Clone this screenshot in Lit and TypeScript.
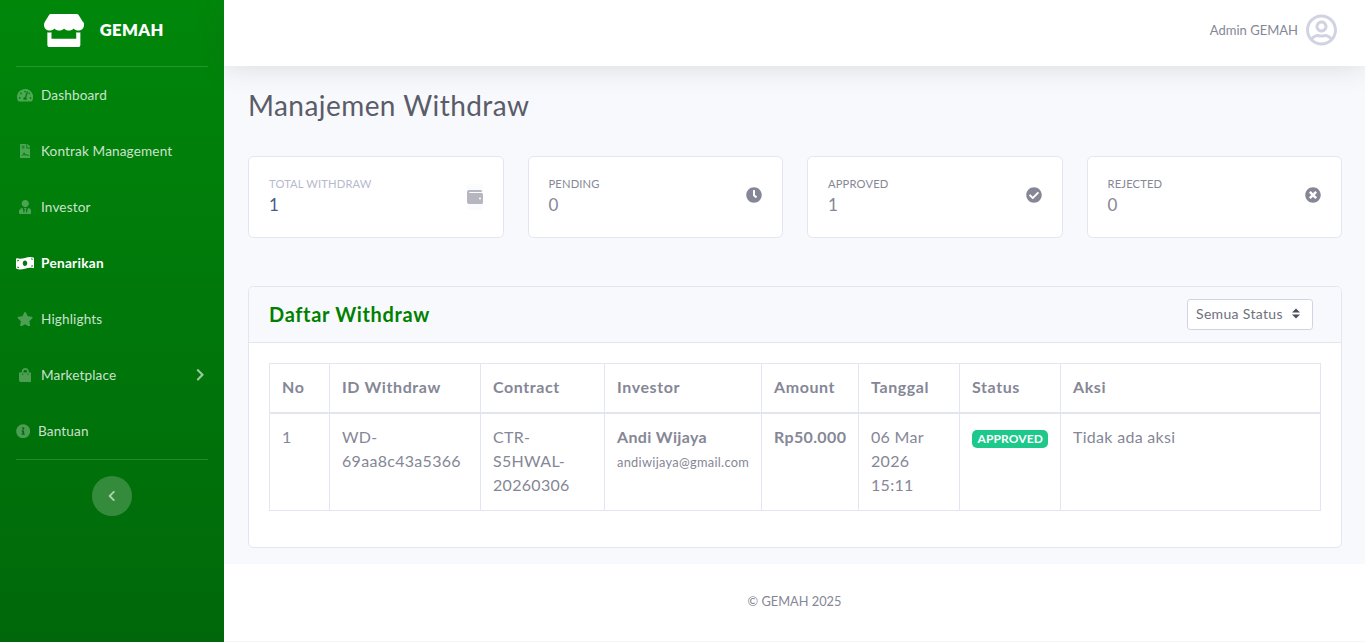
import { LitElement, html, css, svg } from "lit";
import { customElement } from "lit/decorators.js";

const P: Record<string, [number, string]> = {
  store: [616, "M602 118.6L537.1 15C531.3 5.7 521 0 510 0H106C95 0 84.7 5.7 78.9 15L14 118.6c-33.9 54.1-3.9 129.3 59.4 137.9 4.6.6 9.2.9 13.8.9 29.9 0 56.4-13.2 74.6-33.5 18.2 20.3 44.8 33.5 74.6 33.5 29.9 0 56.4-13.2 74.6-33.5 18.2 20.3 44.8 33.5 74.6 33.5 29.9 0 56.4-13.2 74.6-33.5 18.3 20.3 44.8 33.5 74.6 33.5 4.7 0 9.2-.3 13.8-.9 63.5-8.5 93.6-83.7 59.6-137.9zM529.5 288c-10 0-19.9-1.5-29.5-3.8V384H116v-99.8c-9.6 2.2-19.5 3.8-29.5 3.8-6 0-12.1-.4-18-1.2-5.6-.8-11.1-2.1-16.4-3.6V480c0 17.7 14.3 32 32 32h448c17.7 0 32-14.3 32-32V283.2c-5.4 1.6-10.8 2.9-16.4 3.6-6.1.8-12.1 1.2-18.2 1.2z"],
  gauge: [576, "M288 32C128.94 32 0 160.94 0 320c0 52.8 14.25 102.26 39.06 144.8 5.61 9.62 16.3 15.2 27.44 15.2h443c11.14 0 21.83-5.58 27.44-15.2C561.75 422.26 576 372.8 576 320c0-159.06-128.94-288-288-288zm0 64c14.71 0 26.58 10.13 30.32 23.65-1.11 2.26-2.64 4.23-3.45 6.67l-9.22 27.67c-5.13 3.49-10.97 6.01-17.64 6.01-17.67 0-32-14.33-32-32S270.33 96 288 96zM96 384c-17.67 0-32-14.33-32-32s14.33-32 32-32 32 14.33 32 32-14.33 32-32 32zm48-160c-17.67 0-32-14.33-32-32s14.33-32 32-32 32 14.33 32 32-14.33 32-32 32zm246.77-72.41l-61.33 184C343.13 347.33 352 364.54 352 384c0 11.72-3.38 22.55-8.88 32H232.88c-5.5-9.45-8.88-20.28-8.88-32 0-33.94 26.5-61.43 59.9-63.59l61.34-184.01c4.17-12.56 17.73-19.45 30.36-15.17 12.57 4.19 19.35 17.79 15.17 30.36zm14.66 57.2l15.52-46.55c3.47-1.29 7.13-2.23 11.05-2.23 17.67 0 32 14.33 32 32s-14.33 32-32 32c-11.38-.01-20.89-6.28-26.57-15.22zM480 384c-17.67 0-32-14.33-32-32s14.33-32 32-32 32 14.33 32 32-14.33 32-32 32z"],
  file: [384, "M224 136V0H24C10.7 0 0 10.7 0 24v464c0 13.3 10.7 24 24 24h336c13.3 0 24-10.7 24-24V160H248c-13.2 0-24-10.8-24-24zM64 72c0-4.42 3.58-8 8-8h80c4.42 0 8 3.58 8 8v16c0 4.42-3.58 8-8 8H72c-4.42 0-8-3.58-8-8V72zm0 64c0-4.42 3.58-8 8-8h80c4.42 0 8 3.58 8 8v16c0 4.42-3.58 8-8 8H72c-4.42 0-8-3.58-8-8v-16zm192.81 248H304c8.84 0 16 7.16 16 16s-7.16 16-16 16h-47.19c-16.45 0-31.27-9.14-38.64-23.86-2.95-5.92-8.09-6.52-10.17-6.52s-7.22.59-10.02 6.19l-7.67 15.34a15.986 15.986 0 0 1-14.31 8.84c-.38 0-.75-.02-1.14-.05-6.45-.45-12-4.75-14.03-10.89L144 354.59l-10.61 31.88c-5.89 17.66-22.38 29.53-41 29.53H80c-8.84 0-16-7.16-16-16s7.16-16 16-16h12.39c4.83 0 9.11-3.08 10.64-7.66l18.19-54.64c3.3-9.81 12.44-16.41 22.78-16.41s19.48 6.59 22.77 16.41l13.88 41.64c19.77-16.19 54.05-9.7 66 14.16 2.02 4.06 5.96 6.5 10.16 6.5zM377 105L279.1 7c-4.5-4.5-10.6-7-17-7H256v128h128v-6.1c0-6.3-2.5-12.4-7-16.9z"],
  tie: [448, "M224 256c70.7 0 128-57.3 128-128S294.7 0 224 0 96 57.3 96 128s57.3 128 128 128zm95.8 32.6L272 480l-32-136 32-56h-96l32 56-32 136-47.8-191.4C56.9 292 0 350.3 0 422.4V464c0 26.5 21.5 48 48 48h352c26.5 0 48-21.5 48-48v-41.6c0-72.1-56.9-130.4-128.2-133.8z"],
  money: [640, "M621.16 54.46C582.37 38.19 543.55 32 504.75 32c-123.17-.01-246.33 62.34-369.5 62.34-30.89 0-61.76-3.92-92.65-13.72-3.47-1.1-6.95-1.62-10.35-1.62C15.04 79 0 92.32 0 110.81v317.26c0 12.63 7.23 24.6 18.84 29.46C57.63 473.81 96.45 480 135.25 480c123.17 0 246.34-62.35 369.51-62.35 30.89 0 61.76 3.92 92.65 13.72 3.47 1.1 6.95 1.62 10.35 1.62 17.21 0 32.25-13.32 32.25-31.81V83.93c-.01-12.64-7.24-24.6-18.85-29.47zM48 132.22c20.12 5.04 41.12 7.57 62.72 8.93C104.84 170.54 79 192.69 48 192.69v-60.47zm0 285v-47.78c34.37 0 62.18 27.27 63.71 61.4-22.53-1.81-43.59-6.31-63.71-13.62zM320 352c-44.19 0-80-42.99-80-96 0-53.02 35.82-96 80-96s80 42.98 80 96c0 53.03-35.83 96-80 96zm272 27.78c-17.52-4.39-35.71-6.85-54.32-8.44 5.87-26.08 27.5-45.88 54.32-49.28v57.72zm0-236.11c-30.89-3.91-54.86-29.7-55.81-61.55 19.54 2.17 38.09 6.23 55.81 12.66v48.89z"],
  star: [576, "M259.3 17.8L194 150.2 47.9 171.5c-26.2 3.8-36.7 36.1-17.7 54.6l105.7 103-25 145.5c-4.5 26.3 23.2 46 46.4 33.7L288 439.6l130.7 68.7c23.2 12.2 50.9-7.4 46.4-33.7l-25-145.5 105.7-103c19-18.5 8.5-50.8-17.7-54.6L382 150.2 316.7 17.8c-11.7-23.6-45.6-23.9-57.4 0z"],
  bag: [448, "M352 160v-32C352 57.42 294.579 0 224 0 153.42 0 96 57.42 96 128v32H0v272c0 44.183 35.817 80 80 80h288c44.183 0 80-35.817 80-80V160h-96zm-192-32c0-35.29 28.71-64 64-64s64 28.71 64 64v32H160v-32zm160 120c-13.255 0-24-10.745-24-24s10.745-24 24-24 24 10.745 24 24-10.745 24-24 24zm-192 0c-13.255 0-24-10.745-24-24s10.745-24 24-24 24 10.745 24 24-10.745 24-24 24z"],
  info: [512, "M256 8C119.043 8 8 119.083 8 256c0 136.997 111.043 248 248 248s248-111.003 248-248C504 119.083 392.957 8 256 8zm0 110c23.196 0 42 18.804 42 42s-18.804 42-42 42-42-18.804-42-42 18.804-42 42-42zm56 254c0 6.627-5.373 12-12 12h-88c-6.627 0-12-5.373-12-12v-24c0-6.627 5.373-12 12-12h12v-64h-12c-6.627 0-12-5.373-12-12v-24c0-6.627 5.373-12 12-12h64c6.627 0 12 5.373 12 12v100h12c6.627 0 12 5.373 12 12v24z"],
  clock: [512, "M256,8C119,8,8,119,8,256S119,504,256,504,504,393,504,256,393,8,256,8Zm92.49,313h0l-20,25a16,16,0,0,1-22.49,2.5h0l-67-49.72a40,40,0,0,1-15-31.23V112a16,16,0,0,1,16-16h32a16,16,0,0,1,16,16V256l58,42.5A16,16,0,0,1,348.49,321Z"],
  check: [512, "M504 256c0 136.967-111.033 248-248 248S8 392.967 8 256 119.033 8 256 8s248 111.033 248 248zM227.314 387.314l184-184c6.248-6.248 6.248-16.379 0-22.627l-22.627-22.627c-6.248-6.249-16.379-6.249-22.628 0L216 308.118l-70.059-70.059c-6.248-6.248-16.379-6.248-22.628 0l-22.627 22.627c-6.248 6.248-6.248 16.379 0 22.627l104 104c6.249 6.249 16.379 6.249 22.628.001z"],
  times: [512, "M256 8C119 8 8 119 8 256s111 248 248 248 248-111 248-248S393 8 256 8zm121.6 313.1c4.7 4.7 4.7 12.3 0 17L338 377.6c-4.7 4.7-12.3 4.7-17 0L256 312l-65.1 65.6c-4.7 4.7-12.3 4.7-17 0L134.4 338c-4.7-4.7-4.7-12.3 0-17l65.6-65-65.6-65.1c-4.7-4.7-4.7-12.3 0-17l39.6-39.6c4.7-4.7 12.3-4.7 17 0l65 65.7 65.1-65.6c4.7-4.7 12.3-4.7 17 0l39.6 39.6c4.7 4.7 4.7 12.3 0 17L312 256l65.6 65.1z"],
  right: [320, "M285.476 272.971L91.132 467.314c-9.373 9.373-24.569 9.373-33.941 0l-22.667-22.667c-9.357-9.357-9.375-24.522-.04-33.901L188.505 256 34.484 101.255c-9.335-9.379-9.317-24.544.04-33.901l22.667-22.667c9.373-9.373 24.569-9.373 33.941 0L285.475 239.03c9.373 9.372 9.373 24.568.001 33.941z"],
  left: [320, "M34.52 239.03L228.87 44.69c9.37-9.37 24.57-9.37 33.94 0l22.67 22.67c9.36 9.36 9.37 24.52.04 33.9L131.49 256l154.02 154.75c9.34 9.38 9.32 24.54-.04 33.9l-22.67 22.67c-9.37 9.37-24.57 9.37-33.94 0L34.52 272.97c-9.37-9.37-9.37-24.57 0-33.94z"],
  wallet: [512, "M461.2 128H80c-8.84 0-16-7.16-16-16s7.16-16 16-16h384c8.84 0 16-7.16 16-16 0-26.51-21.49-48-48-48H64C28.65 32 0 60.65 0 96v320c0 35.35 28.65 64 64 64h397.2c28.02 0 50.8-21.53 50.8-48V176c0-26.47-22.78-48-50.8-48zM416 336c-17.67 0-32-14.33-32-32s14.33-32 32-32 32 14.33 32 32-14.33 32-32 32z"],
  user: [496, "M248 104c-53 0-96 43-96 96s43 96 96 96 96-43 96-96-43-96-96-96zm0 144c-26.5 0-48-21.5-48-48s21.5-48 48-48 48 21.5 48 48-21.5 48-48 48zm0-240C111 8 0 119 0 256s111 248 248 248 248-111 248-248S385 8 248 8zm0 448c-49.7 0-95.1-18.3-130.1-48.4 14.9-23 40.4-38.6 69.6-39.5 20.8 6.4 40.6 9.6 60.5 9.6s39.7-3.1 60.5-9.6c29.2 1 54.7 16.5 69.6 39.5-35 30.1-80.4 48.4-130.1 48.4zm162.7-84.1c-24.4-31.4-62.1-51.9-105.1-51.9-10.2 0-26 9.6-57.6 9.6-31.5 0-47.4-9.6-57.6-9.6-42.9 0-80.6 20.5-105.1 51.9C61.9 339.2 48 299.2 48 256c0-110.3 89.7-200 200-200s200 89.7 200 200c0 43.2-13.9 83.2-37.3 115.9z"],
};

const icon = (n: string, cls = "") => {
  const [w, d] = P[n];
  return html`<svg class="i ${cls}" viewBox="0 0 ${w} 512" aria-hidden="true">${svg`<path fill="currentColor" d="${d}"></path>`}</svg>`;
};

const nav: { ic: string; label: string; active?: boolean; arrow?: boolean; tight?: boolean }[] = [
  { ic: "gauge", label: "Dashboard" },
  { ic: "file", label: "Kontrak Management" },
  { ic: "tie", label: "Investor" },
  { ic: "money", label: "Penarikan", active: true },
  { ic: "star", label: "Highlights" },
  { ic: "bag", label: "Marketplace", arrow: true },
  { ic: "info", label: "Bantuan", tight: true },
];

const stats = [
  { label: "TOTAL WITHDRAW", value: "1", ic: "wallet", first: true },
  { label: "PENDING", value: "0", ic: "clock" },
  { label: "APPROVED", value: "1", ic: "check" },
  { label: "REJECTED", value: "0", ic: "times" },
];

const cols = [60, 151, 124, 157, 97, 101, 101, 260];

@customElement("app-root")
export class AppRoot extends LitElement {
  static styles = css`
    :host {
      display: flex;
      width: 100%;
      height: 642px;
      overflow: hidden;
      font-family: "Lato", "Noto Sans", sans-serif;
      color: #858796;
      font-size: 16px;
      line-height: 24px;
      background: #f8f9fc;
    }
    * { box-sizing: border-box; }
    .i { display: block; flex: none; height: 1em; }

    .side {
      width: 224px;
      flex: none;
      display: flex;
      flex-direction: column;
      align-items: stretch;
      background: linear-gradient(180deg, #00870a 0%, #00680a 100%);
    }
    .brand {
      height: 66px;
      flex: none;
      display: flex;
      align-items: center;
      padding: 0 0 6px 44px;
      gap: 16px;
      color: #fff;
    }
    .brand .i { font-size: 33px; }
    .brand b { font-size: 16.6px; font-weight: 800; letter-spacing: 0.4px; line-height: 24px; }
    .rule { height: 1px; margin: 0 16px; flex: none; background: rgba(255, 255, 255, 0.15); }
    .item {
      height: 56px;
      flex: none;
      display: flex;
      align-items: center;
      padding: 0 16px;
      font-size: 13.6px;
      letter-spacing: 0.13px;
      color: rgba(255, 255, 255, 0.8);
    }
    .slot { width: 18px; margin-right: 7px; display: flex; justify-content: center; color: rgba(255, 255, 255, 0.3); font-size: 14.4px; }
    .item.tight .slot { width: 14.4px; margin-right: 7.6px; justify-content: flex-start; }
    .item.active { color: #fff; font-weight: 700; letter-spacing: 0.3px; }
    .item.active .slot { color: #fff; }
    .arrow { margin-left: auto; margin-right: 4px; font-size: 13.6px; color: rgba(255, 255, 255, 0.6); }
    .toggle {
      width: 40px;
      height: 40px;
      border-radius: 50%;
      margin: 16px auto 0;
      display: flex;
      align-items: center;
      justify-content: center;
      color: rgba(255, 255, 255, 0.6);
      background: rgba(255, 255, 255, 0.2);
      font-size: 12px;
    }

    .main { flex: 1; min-width: 0; display: flex; flex-direction: column; background: #f8f6f1; }
    .top {
      height: 66px;
      flex: none;
      display: flex;
      align-items: center;
      justify-content: flex-end;
      gap: 8px;
      padding: 0 28px 6px 0;
      background: #fff;
      box-shadow: 0 2px 28px rgba(58, 59, 69, 0.15);
      position: relative;
      font-size: 13px;
    }
    .top .i { font-size: 32px; color: #d1d3e2; }

    .content { flex: 1; padding: 22px 23px 16px 24px; background: #f8f9fc; }
    h1 { margin: 0; font-size: 28px; line-height: 34px; font-weight: 400; letter-spacing: 0.44px; color: #5a5c69; }
    .stats { display: grid; grid-template-columns: repeat(4, 1fr); gap: 24px; margin-top: 34px; }
    .stat {
      height: 82px;
      background: #fff;
      border: 1px solid #e3e6f0;
      border-radius: 5.6px;
      padding: 20px;
      display: flex;
      align-items: center;
      justify-content: space-between;
    }
    .stat-text { padding-bottom: 2px; }
    .stat small { display: block; font-size: 11.2px; line-height: 16px; letter-spacing: 0.15px; text-transform: uppercase; }
    .stat span { display: block; font-size: 17px; line-height: 25px; }
    .stat.first small { color: #b7b9cc; }
    .stat.first span { color: #4e5a86; }
    .stat .ico { font-size: 16px; color: #858796; margin-top: -4px; }
    .stat.first .ico { opacity: 0.6; background: #f8f9fc; border-radius: 4px; padding: 5px 0; height: 26px; margin-top: 0; }

    .card {
      margin-top: 48px;
      height: 262px;
      background: #fff;
      border: 1px solid #e3e6f0;
      border-radius: 5.6px;
      overflow: hidden;
    }
    .card-head {
      height: 56px;
      padding: 0 28px 0 20px;
      display: flex;
      align-items: center;
      justify-content: space-between;
      background: #f8f9fc;
      border-bottom: 1px solid #e3e6f0;
    }
    .card-head h2 { margin: 0 0 2px; font-size: 20px; line-height: 24px; font-weight: 700; letter-spacing: 0.67px; color: #008000; }
    .sel {
      width: 126px;
      height: 31px;
      padding: 0 12px 2px 8px;
      display: flex;
      align-items: center;
      justify-content: space-between;
      font-size: 14px;
      letter-spacing: 0.33px;
      color: #6e707e;
      background: #fff;
      border: 1px solid #d1d3e2;
      border-radius: 3.2px;
    }
    .card-body { padding: 20px; }
    table { border-collapse: collapse; table-layout: fixed; width: 1051px; }
    th, td { border: 1px solid #e3e6f0; padding: 11px 12px 13px; vertical-align: top; text-align: left; letter-spacing: 0.3px; }
    th { font-weight: 700; border-bottom-width: 2px; letter-spacing: 0.6px; }
    td strong { font-weight: 700; display: block; letter-spacing: 0.35px; }
    .mail { font-size: 12.8px; display: block; margin-top: 1px; }
    .badge {
      display: inline-block;
      background: #1cc88a;
      color: #fff;
      font-size: 12px;
      font-weight: 700;
      line-height: 12px;
      letter-spacing: 0.1px;
      padding: 3px 5.5px;
      border-radius: 5px;
      vertical-align: top;
      margin-top: 5px;
    }

    footer {
      height: 77px;
      flex: none;
      margin-bottom: 1px;
      padding-bottom: 4px;
      background: #fff;
      display: flex;
      align-items: center;
      justify-content: center;
      font-size: 12.8px;
    }
  `;

  render() {
    return html`
      <aside class="side">
        <div class="brand">${icon("store")}<b>GEMAH</b></div>
        <div class="rule"></div>
        ${nav.map(
          (n) => html`<div class="item ${n.active ? "active" : ""} ${n.tight ? "tight" : ""}">
            <span class="slot">${icon(n.ic)}</span>${n.label}
            ${n.arrow ? html`<span class="arrow">${icon("right")}</span>` : ""}
          </div>`
        )}
        <div class="rule"></div>
        <div class="toggle">${icon("left")}</div>
      </aside>
      <div class="main">
        <header class="top">Admin GEMAH ${icon("user")}</header>
        <div class="content">
          <h1>Manajemen Withdraw</h1>
          <div class="stats">
            ${stats.map(
              (s) => html`<div class="stat ${s.first ? "first" : ""}">
                <div class="stat-text"><small>${s.label}</small><span>${s.value}</span></div>
                <div class="ico">${icon(s.ic)}</div>
              </div>`
            )}
          </div>
          <section class="card">
            <div class="card-head">
              <h2>Daftar Withdraw</h2>
              <div class="sel">Semua Status
                <svg width="8" height="11" viewBox="0 0 8 11" aria-hidden="true">${svg`<path fill="#4b4e5c" d="M4 .5 8 4.5H0zM4 10.5 0 6.5h8z"></path>`}</svg>
              </div>
            </div>
            <div class="card-body">
              <table>
                <colgroup>${cols.map((c) => html`<col style="width:${c}px" />`)}</colgroup>
                <thead>
                  <tr>
                    ${["No", "ID Withdraw", "Contract", "Investor", "Amount", "Tanggal", "Status", "Aksi"].map(
                      (h) => html`<th>${h}</th>`
                    )}
                  </tr>
                </thead>
                <tbody>
                  <tr>
                    <td>1</td>
                    <td>WD-<br />69aa8c43a5366</td>
                    <td>CTR-<br />S5HWAL-<br />20260306</td>
                    <td><strong>Andi Wijaya</strong><span class="mail">andiwijaya@gmail.com</span></td>
                    <td><strong>Rp50.000</strong></td>
                    <td>06 Mar<br />2026<br />15:11</td>
                    <td><span class="badge">APPROVED</span></td>
                    <td>Tidak ada aksi</td>
                  </tr>
                </tbody>
              </table>
            </div>
          </section>
        </div>
        <footer>© GEMAH 2025</footer>
      </div>
    `;
  }
}
